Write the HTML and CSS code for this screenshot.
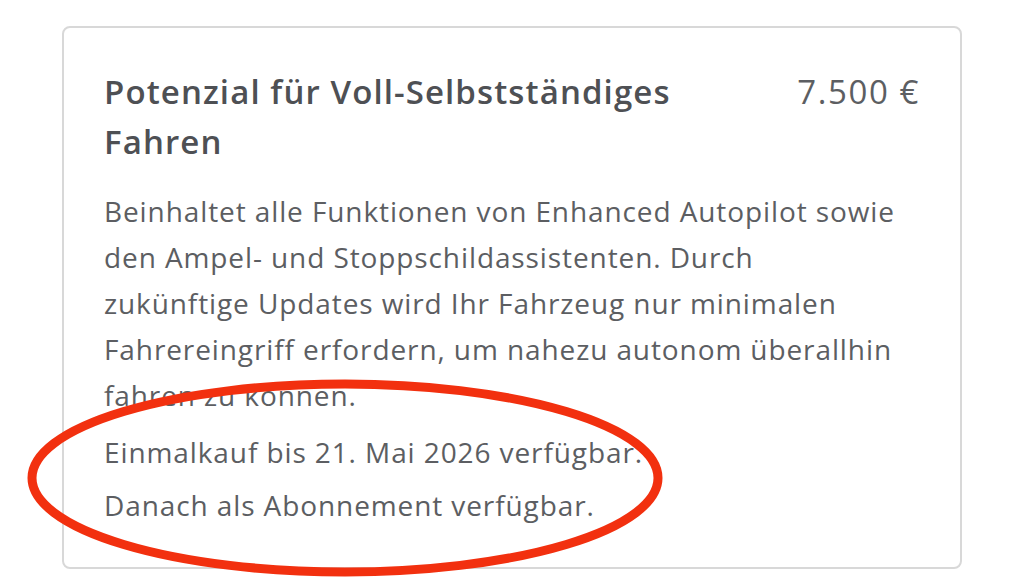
FILE: index.html
```html
<!DOCTYPE html>
<html lang="de">
<head>
<meta charset="utf-8">
<title>Potenzial für Voll-Selbstständiges Fahren</title>
<link rel="stylesheet" href="styles.css">
</head>
<body>
<div class="page">
  <section class="card">
    <header class="card-head">
      <h2 class="title">Potenzial für Voll-Selbstständiges<br>Fahren</h2>
      <span class="price">7.500 €</span>
    </header>
    <p class="desc">Beinhaltet alle Funktionen von Enhanced Autopilot sowie<br>den Ampel- und Stoppschildassistenten. Durch<br>zukünftige Updates wird Ihr Fahrzeug nur minimalen<br>Fahrereingriff erfordern, um nahezu autonom überallhin<br>fahren zu können.</p>
    <p class="note note-first">Einmalkauf bis 21. Mai 2026 verfügbar.</p>
    <p class="note">Danach als Abonnement verfügbar.</p>
  </section>
  <svg class="circle" width="660" height="216" viewBox="0 0 660 216" aria-hidden="true">
    <ellipse cx="325" cy="108" rx="313" ry="94" fill="none" stroke="#f2300f" stroke-width="9"/>
  </svg>
</div>
</body>
</html>
```

FILE: styles.css
```css
* { box-sizing: border-box; }
html, body { margin: 0; padding: 0; background: #ffffff; }
body {
  font-family: "Open Sans", "Liberation Sans", sans-serif;
  color: #5c5e62;
}
.page {
  position: relative;
  width: 1024px;
  height: 588px;
  padding: 26px 0 0 62px;
}
.card {
  width: 900px;
  height: 543px;
  border: 2px solid #d8d8d8;
  border-radius: 8px;
  padding: 39px 40px 0 40px;
}
.card-head {
  display: flex;
  justify-content: space-between;
  align-items: flex-start;
}
.title {
  margin: 0;
  font-size: 33px;
  line-height: 50px;
  font-weight: 600;
  letter-spacing: 1.1px;
  color: #4e5054;
  white-space: nowrap;
}
.price {
  font-size: 33px;
  line-height: 50px;
  font-weight: 400;
  letter-spacing: 1.6px;
  color: #5c5e62;
}
.desc {
  margin: 21px 0 0 0;
  font-size: 28px;
  line-height: 46px;
  letter-spacing: 0.9px;
  color: #5c5e62;
  white-space: nowrap;
}
.note {
  margin: 7px 0 0 0;
  font-size: 28px;
  line-height: 46px;
  letter-spacing: 0.9px;
  color: #5c5e62;
  white-space: nowrap;
}
.note-first { margin-top: 11px; }
.circle {
  position: absolute;
  left: 20px;
  top: 370px;
}
```
